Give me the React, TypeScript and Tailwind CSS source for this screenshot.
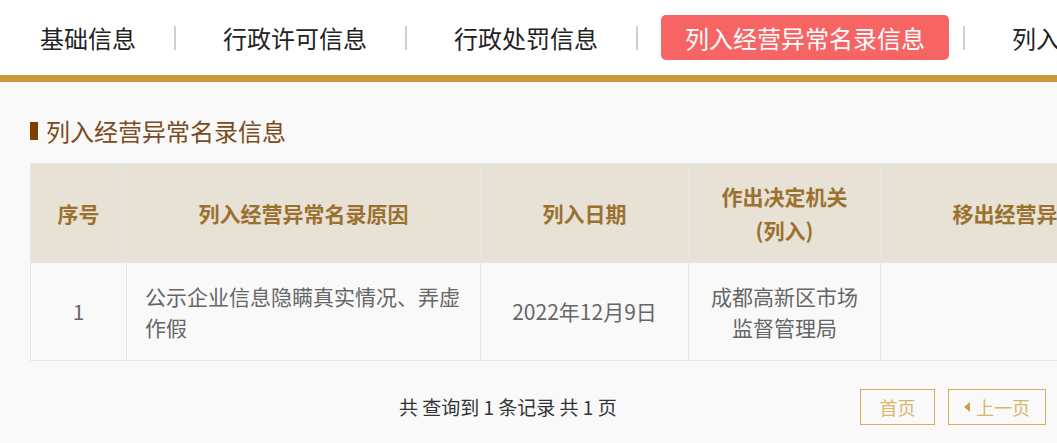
import React from "react";

const TABS = ["基础信息", "行政许可信息", "行政处罚信息", "列入经营异常名录信息", "列入严重违法失信名单信息"];
const ACTIVE = 3;

const FONT = { fontFamily: '"Noto Sans CJK SC", "Noto Sans", sans-serif' };

function TabBar() {
  return (
    <div className="flex h-[75px] items-center overflow-hidden whitespace-nowrap bg-white pl-4">
      {TABS.map((t, i) => (
        <div key={t} className="flex shrink-0 items-center">
          {i > 0 && <div className="ml-[14px] mr-[23px] h-6 w-[2px] bg-[#cfcfcf]" />}
          <div
            className={`flex h-[45px] items-center rounded-[5px] px-6 text-[24px] ${
              i === ACTIVE ? "bg-[#f66464] text-white" : "text-[#222]"
            }`}
          >
            {t}
          </div>
        </div>
      ))}
    </div>
  );
}

const HEADS: { label: React.ReactNode; w: string }[] = [
  { label: "序号", w: "w-[96px]" },
  { label: "列入经营异常名录原因", w: "w-[354px]" },
  { label: "列入日期", w: "w-[208px]" },
  {
    label: (
      <>
        作出决定机关
        <br />
        (列入)
      </>
    ),
    w: "w-[192px]",
  },
  { label: "移出经营异常名录原因", w: "w-[354px]" },
  { label: "移出日期", w: "w-[208px]" },
];

export default function App() {
  return (
    <div className="h-[443px] w-[1057px] overflow-hidden bg-[#f9f9f9]" style={FONT}>
      <TabBar />
      <div className="h-[7px] bg-[#c9993b]" />

      <div className="pl-[30px]">
        <div className="flex h-[81px] items-center pt-[16px]">
          <div className="mr-2 h-[18px] w-2 bg-[#7f3f00]" />
          <h2 className="text-[24px] leading-none text-[#7b4b1c]">列入经营异常名录信息</h2>
        </div>

        <table className="w-[1412px] table-fixed border-collapse text-center">
          <thead>
            <tr className="h-[99px] bg-[#e8e1d6]">
              {HEADS.map((h, i) => (
                <th
                  key={i}
                  className={`${h.w} border border-[#e6e6e6] text-[21px] font-bold leading-[34px] text-[#9a712e]`}
                >
                  {h.label}
                </th>
              ))}
            </tr>
          </thead>
          <tbody>
            <tr className="h-[98px] text-[21px] leading-[31px] text-[#666]">
              <td className="border border-[#e6e6e6]">1</td>
              <td className="border border-[#e6e6e6] pl-[18px] pr-[14px] text-left">
                公示企业信息隐瞒真实情况、弄虚作假
              </td>
              <td className="border border-[#e6e6e6]">2022年12月9日</td>
              <td className="border border-[#e6e6e6] px-4">
                成都高新区市场
                <br />
                监督管理局
              </td>
              <td className="border border-[#e6e6e6]"></td>
              <td className="border border-[#e6e6e6]"></td>
            </tr>
          </tbody>
        </table>

        <div className="mt-[28px] flex items-center whitespace-nowrap">
          <div className="ml-[369px] w-[216px] text-[19px] text-[#333]">共 查询到 1 条记录 共 1 页</div>
          <button className="ml-[245px] h-9 w-[75px] shrink-0 border border-[#d6ad5c] text-[18px] text-[#dab56c]">
            首页
          </button>
          <button className="ml-[13px] flex h-9 w-[98px] shrink-0 items-center justify-center gap-[6px] border border-[#d6ad5c] text-[18px] text-[#dab56c]">
            <svg width="6" height="10" viewBox="0 0 6 10">
              <path d="M6 0L0 5l6 5z" fill="#c9a050" />
            </svg>
            上一页
          </button>
        </div>
      </div>
    </div>
  );
}
